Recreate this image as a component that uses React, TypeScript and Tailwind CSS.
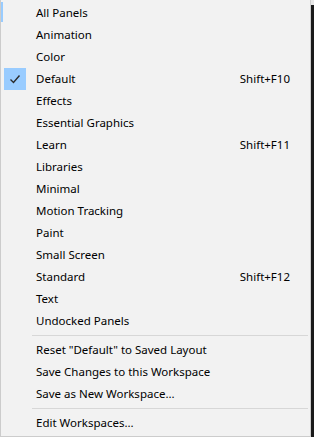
import React from 'react';

type Entry = { label: string; shortcut?: string; checked?: boolean } | 'sep';

const entries: Entry[] = [
  { label: 'All Panels' },
  { label: 'Animation' },
  { label: 'Color' },
  { label: 'Default', shortcut: 'Shift+F10', checked: true },
  { label: 'Effects' },
  { label: 'Essential Graphics' },
  { label: 'Learn', shortcut: 'Shift+F11' },
  { label: 'Libraries' },
  { label: 'Minimal' },
  { label: 'Motion Tracking' },
  { label: 'Paint' },
  { label: 'Small Screen' },
  { label: 'Standard', shortcut: 'Shift+F12' },
  { label: 'Text' },
  { label: 'Undocked Panels' },
  'sep',
  { label: 'Reset "Default" to Saved Layout' },
  { label: 'Save Changes to this Workspace' },
  { label: 'Save as New Workspace...' },
  'sep',
  { label: 'Edit Workspaces...' },
];

const Check = () => (
  <svg width="12" height="12" viewBox="0 0 12 12" fill="none">
    <path d="M1.5 6.5 L4.5 9.5 L10.5 2.5" stroke="#2b2b2b" strokeWidth="1.4" />
  </svg>
);

export default function App() {
  return (
    <div
      className="flex w-[314px] h-[437px] bg-[#f2f2f2] text-[11.5px] text-black"
      style={{ fontFamily: '"Segoe UI", "Noto Sans", sans-serif' }}
    >
      <div className="relative flex flex-col w-[311px] h-[437px] border-l border-r border-b border-[#cccccc] pt-[2px]">
        <div className="absolute left-0 top-[2px] w-[2px] h-[20px] bg-[#99ccff]" />
        {entries.map((e, i) =>
          e === 'sep' ? (
            <div key={i} className="h-[7px] flex items-center pl-[31px] pr-[2px]">
              <div className="w-full h-px bg-[#d7d7d7]" />
            </div>
          ) : (
            <div key={i} className="flex items-center h-[22px]">
              <div className="w-[35px] flex items-center pl-[3px]">
                {e.checked && (
                  <div className="w-[22px] h-[22px] bg-[#99ccff] flex items-center justify-center">
                    <Check />
                  </div>
                )}
              </div>
              <span className="flex-1 whitespace-nowrap">{e.label}</span>
              {e.shortcut && <span className="mr-[20px]">{e.shortcut}</span>}
            </div>
          )
        )}
      </div>
      <div className="flex flex-col w-[3px] h-[437px]">
        <div className="h-[5px] bg-[#e6e6e6]" />
        <div className="flex-1 bg-[#1a1a1a]" />
      </div>
    </div>
  );
}
